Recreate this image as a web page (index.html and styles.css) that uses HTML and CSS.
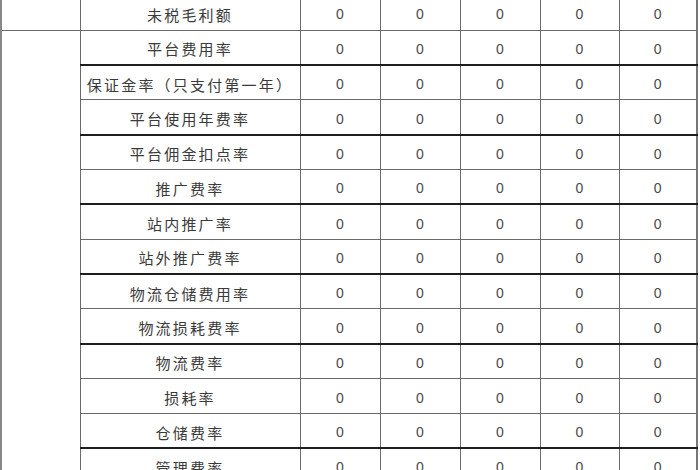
FILE: index.html
```html
<!DOCTYPE html>
<html lang="zh">
<head>
<meta charset="utf-8">
<title>费率表</title>
<link rel="stylesheet" href="styles.css">
</head>
<body>
<div class="sheet">
<table class="grid">
<colgroup>
<col class="c-group"><col class="c-label"><col class="c-val"><col class="c-val"><col class="c-val"><col class="c-val4"><col class="c-val5">
</colgroup>
<tbody>
<tr><td class="group"></td><td class="label">未税毛利额</td><td class="num">0</td><td class="num">0</td><td class="num">0</td><td class="num">0</td><td class="num">0</td></tr>
<tr class="thick"><td class="group" rowspan="13"></td><td class="label">平台费用率</td><td class="num">0</td><td class="num">0</td><td class="num">0</td><td class="num">0</td><td class="num">0</td></tr>
<tr><td class="label">保证金率（只支付第一年）</td><td class="num">0</td><td class="num">0</td><td class="num">0</td><td class="num">0</td><td class="num">0</td></tr>
<tr class="thick"><td class="label">平台使用年费率</td><td class="num">0</td><td class="num">0</td><td class="num">0</td><td class="num">0</td><td class="num">0</td></tr>
<tr><td class="label">平台佣金扣点率</td><td class="num">0</td><td class="num">0</td><td class="num">0</td><td class="num">0</td><td class="num">0</td></tr>
<tr class="thick"><td class="label">推广费率</td><td class="num">0</td><td class="num">0</td><td class="num">0</td><td class="num">0</td><td class="num">0</td></tr>
<tr><td class="label">站内推广率</td><td class="num">0</td><td class="num">0</td><td class="num">0</td><td class="num">0</td><td class="num">0</td></tr>
<tr class="thick"><td class="label">站外推广费率</td><td class="num">0</td><td class="num">0</td><td class="num">0</td><td class="num">0</td><td class="num">0</td></tr>
<tr><td class="label">物流仓储费用率</td><td class="num">0</td><td class="num">0</td><td class="num">0</td><td class="num">0</td><td class="num">0</td></tr>
<tr class="thick"><td class="label">物流损耗费率</td><td class="num">0</td><td class="num">0</td><td class="num">0</td><td class="num">0</td><td class="num">0</td></tr>
<tr><td class="label">物流费率</td><td class="num">0</td><td class="num">0</td><td class="num">0</td><td class="num">0</td><td class="num">0</td></tr>
<tr><td class="label">损耗率</td><td class="num">0</td><td class="num">0</td><td class="num">0</td><td class="num">0</td><td class="num">0</td></tr>
<tr class="thick"><td class="label">仓储费率</td><td class="num">0</td><td class="num">0</td><td class="num">0</td><td class="num">0</td><td class="num">0</td></tr>
<tr><td class="label">管理费率</td><td class="num">0</td><td class="num">0</td><td class="num">0</td><td class="num">0</td><td class="num">0</td></tr>
</tbody>
</table>
</div>
</body>
</html>
```
FILE: styles.css
```css
html, body {
  margin: 0;
  padding: 0;
  background: #ffffff;
}
body {
  width: 700px;
  height: 470px;
  overflow: hidden;
}
.sheet {
  padding-left: 0;
}
.grid {
  border-collapse: collapse;
  table-layout: fixed;
  width: 698px;
  margin-top: -5px;
  border-left: 2px solid #888;
  border-right: 2px solid #777;
}
.c-group { width: 79px; }
.c-label { width: 220px; }
.c-val { width: 80px; }
.c-val4 { width: 79px; }
.c-val5 { width: 78px; }
.grid td {
  height: 34.83px;
  padding: 0;
  border: 1px solid #6a6a6a;
  text-align: center;
  vertical-align: middle;
  box-sizing: border-box;
}
.grid td.group {
  border-left: 2px solid #888;
}
.grid tr.thick td {
  border-bottom: 2px solid #1e1e1e;
}
.grid tr.thick td.group {
  border-bottom: 1px solid #6a6a6a;
}
.label {
  font-family: "Noto Sans CJK SC", "Noto Sans", sans-serif;
  font-size: 15px;
  letter-spacing: 2.2px;
  color: #3a3a3a;
  padding-top: 3px !important;
  white-space: nowrap;
}
.num {
  font-family: "Liberation Sans", Arial, sans-serif;
  font-size: 14px;
  color: #4a4a4a;
  padding-top: 3px !important;
}
```
